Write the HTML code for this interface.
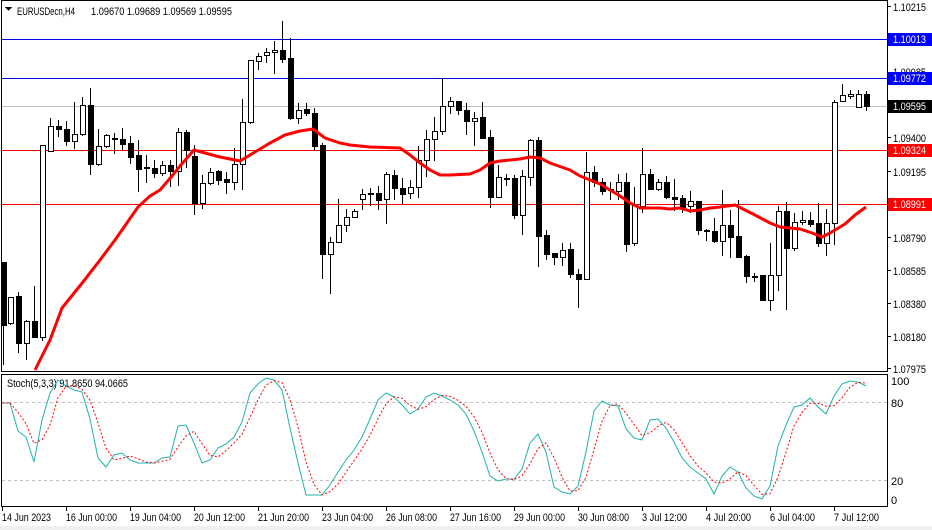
<!DOCTYPE html>
<html><head><meta charset="utf-8"><style>
html,body{margin:0;padding:0;background:#fff;width:932px;height:530px;overflow:hidden}
svg text{font-family:"Liberation Sans",Tahoma,sans-serif;font-size:11px;fill:#000}
</style></head><body>
<svg id="s" width="932" height="530" viewBox="0 0 932 530" xmlns="http://www.w3.org/2000/svg" shape-rendering="crispEdges">
<rect x="0" y="0" width="932" height="530" fill="#fff"/>
<rect x="0" y="526" width="932" height="4" fill="#f0f0f0"/>
<rect x="1.5" y="0.5" width="886" height="371" fill="none" stroke="#000"/>
<rect x="1.5" y="374.5" width="886" height="132" fill="none" stroke="#000"/>
<line x1="2" y1="39.5" x2="887" y2="39.5" stroke="#0000e0"/>
<line x1="2" y1="78.5" x2="887" y2="78.5" stroke="#0000e0"/>
<line x1="2" y1="106.5" x2="887" y2="106.5" stroke="#c0c0c0"/>
<line x1="2" y1="150.5" x2="887" y2="150.5" stroke="#ff0000"/>
<line x1="2" y1="204.5" x2="887" y2="204.5" stroke="#ff0000"/>
<g id="candles"></g>
<polyline fill="none" stroke="#ff0000" stroke-width="3" shape-rendering="auto" stroke-linejoin="round" points="35,370 50,340 62,308 83,282 100,260 115,240 138,207 150,196 160,190 172,176 180,166 194,150 205,153 220,157 240,161 255,152 270,143 285,135 300,131 313,129 325,138 340,143 350,145 370,147 400,148 410,155 420,163 430,170 440,175 450,175 470,174 480,170 490,163 500,161 520,159 530,157 540,158 550,163 570,170 580,176 590,180 600,184 610,190 620,196 630,203 640,208 660,208 670,209 680,208 690,211 700,210 710,208 720,207 735,205 745,210 755,215 770,223 780,227 790,228 800,229 812,233 822,237 830,233 845,224 855,215 866,207"/>
<path d="M5 7 L12 7 L8.5 11 Z" fill="#000"/>
<text x="17" y="15" textLength="58" lengthAdjust="spacingAndGlyphs">EURUSDecn,H4</text>
<text x="91" y="15" textLength="141" lengthAdjust="spacingAndGlyphs">1.09670 1.09689 1.09569 1.09595</text>
<g>
<line x1="887" y1="6.5" x2="891" y2="6.5" stroke="#000"/><text x="893" y="11" textLength="33" lengthAdjust="spacingAndGlyphs">1.10215</text>
<rect x="888" y="33" width="44" height="13" fill="#0000ff"/><text x="893" y="43" textLength="33" lengthAdjust="spacingAndGlyphs" style="fill:#fff">1.10013</text>
<text x="893" y="76" textLength="33" lengthAdjust="spacingAndGlyphs">1.09985</text>
<rect x="888" y="72" width="44" height="13" fill="#0000ff"/><text x="893" y="82" textLength="33" lengthAdjust="spacingAndGlyphs" style="fill:#fff">1.09772</text>
<rect x="888" y="100" width="44" height="13" fill="#000"/><text x="893" y="110" textLength="33" lengthAdjust="spacingAndGlyphs" style="fill:#fff">1.09595</text>
<line x1="887" y1="137.5" x2="891" y2="137.5" stroke="#000"/><text x="893" y="142" textLength="33" lengthAdjust="spacingAndGlyphs">1.09400</text>
<rect x="888" y="144" width="44" height="13" fill="#ff0000"/><text x="893" y="154" textLength="33" lengthAdjust="spacingAndGlyphs" style="fill:#fff">1.09324</text>
<line x1="887" y1="171.5" x2="891" y2="171.5" stroke="#000"/><text x="893" y="176" textLength="33" lengthAdjust="spacingAndGlyphs">1.09195</text>
<rect x="888" y="198" width="44" height="13" fill="#ff0000"/><text x="893" y="208" textLength="33" lengthAdjust="spacingAndGlyphs" style="fill:#fff">1.08991</text>
<line x1="887" y1="237.5" x2="891" y2="237.5" stroke="#000"/><text x="893" y="242" textLength="33" lengthAdjust="spacingAndGlyphs">1.08790</text>
<line x1="887" y1="270.5" x2="891" y2="270.5" stroke="#000"/><text x="893" y="275" textLength="33" lengthAdjust="spacingAndGlyphs">1.08585</text>
<line x1="887" y1="303.5" x2="891" y2="303.5" stroke="#000"/><text x="893" y="308" textLength="33" lengthAdjust="spacingAndGlyphs">1.08380</text>
<line x1="887" y1="336.5" x2="891" y2="336.5" stroke="#000"/><text x="893" y="341" textLength="33" lengthAdjust="spacingAndGlyphs">1.08180</text>
<line x1="887" y1="368.5" x2="891" y2="368.5" stroke="#000"/><text x="893" y="373" textLength="33" lengthAdjust="spacingAndGlyphs">1.07975</text>
</g>
<line x1="2" y1="402.5" x2="887" y2="402.5" stroke="#c0c0c0" stroke-dasharray="3,3"/>
<line x1="2" y1="480.5" x2="887" y2="480.5" stroke="#c0c0c0" stroke-dasharray="3,3"/>
<text x="7" y="387" textLength="121" lengthAdjust="spacingAndGlyphs">Stoch(5,3,3) 91.8650 94.0665</text>
<polyline id="kline" fill="none" stroke="#20b2aa" stroke-width="1" shape-rendering="auto"/>
<polyline id="dline" fill="none" stroke="#ff0000" stroke-width="1" stroke-dasharray="2,2" shape-rendering="auto"/>
<text x="891" y="385">100</text>
<text x="891" y="407">80</text>
<text x="891" y="485">20</text>
<text x="891" y="504">0</text>
<g id="ticks"></g>
<g>
<text x="2" y="521" textLength="49" lengthAdjust="spacingAndGlyphs">14 Jun 2023</text>
<text x="66" y="521" textLength="51" lengthAdjust="spacingAndGlyphs">16 Jun 00:00</text>
<text x="130" y="521" textLength="51" lengthAdjust="spacingAndGlyphs">19 Jun 04:00</text>
<text x="194" y="521" textLength="51" lengthAdjust="spacingAndGlyphs">20 Jun 12:00</text>
<text x="258" y="521" textLength="51" lengthAdjust="spacingAndGlyphs">21 Jun 20:00</text>
<text x="322" y="521" textLength="51" lengthAdjust="spacingAndGlyphs">23 Jun 04:00</text>
<text x="386" y="521" textLength="51" lengthAdjust="spacingAndGlyphs">26 Jun 08:00</text>
<text x="450" y="521" textLength="51" lengthAdjust="spacingAndGlyphs">27 Jun 16:00</text>
<text x="514" y="521" textLength="51" lengthAdjust="spacingAndGlyphs">29 Jun 00:00</text>
<text x="578" y="521" textLength="51" lengthAdjust="spacingAndGlyphs">30 Jun 08:00</text>
<text x="642" y="521" textLength="45" lengthAdjust="spacingAndGlyphs">3 Jul 12:00</text>
<text x="706" y="521" textLength="45" lengthAdjust="spacingAndGlyphs">4 Jul 20:00</text>
<text x="770" y="521" textLength="45" lengthAdjust="spacingAndGlyphs">6 Jul 04:00</text>
<text x="834" y="521" textLength="45" lengthAdjust="spacingAndGlyphs">7 Jul 12:00</text>
</g>
</svg>
<script>
var C=[[3,262,325,262,365,0],[10,297,323,297,325,1],[18,296,343,292,353,0],[26,321,343,320,360,1],[34,321,337,286,338,0],[42,145,337,145,341,1],[50,126,151,118,152,1],[58,126,129,120,137,0],[66,129,141,121,146,0],[74,134,141,102,149,1],[82,105,134,97,136,1],[90,105,164,88,175,0],[98,146,164,129,166,1],[106,135,146,134,148,1],[114,138,139,133,154,0],[122,139,144,128,150,0],[130,143,157,136,164,0],[138,155,169,140,192,0],[146,167,168,155,183,0],[154,168,173,160,178,0],[162,165,173,161,176,1],[170,165,171,160,187,0],[178,132,171,128,186,1],[186,132,150,130,168,0],[194,156,203,145,215,0],[202,183,203,175,209,1],[210,172,183,168,185,1],[218,171,180,170,185,0],[226,179,182,172,194,0],[234,164,182,148,190,1],[242,122,164,99,190,1],[250,60,122,60,124,1],[258,56,61,53,70,1],[266,52,55,48,63,1],[274,50,52,41,74,1],[282,50,59,21,63,0],[290,58,118,38,120,0],[298,110,118,103,124,1],[306,109,113,103,116,0],[314,113,146,108,151,0],[322,145,254,143,279,0],[330,242,254,237,294,1],[338,225,242,199,243,1],[346,217,225,209,232,1],[354,211,217,209,218,1],[362,194,199,189,210,1],[370,193,194,188,206,0],[378,193,200,186,210,0],[386,174,199,172,224,1],[394,175,188,170,200,0],[402,188,194,178,204,0],[410,187,193,180,199,1],[418,160,187,146,198,1],[426,139,160,130,177,1],[434,131,139,117,161,1],[442,106,131,78,135,1],[450,101,106,97,114,1],[458,101,110,101,115,0],[466,110,121,103,135,0],[474,118,121,112,146,1],[482,117,138,102,139,0],[490,137,197,130,208,0],[498,177,197,165,198,1],[506,178,179,174,186,0],[514,178,215,175,219,0],[522,176,215,170,235,1],[530,140,177,139,186,1],[538,140,236,137,267,0],[546,235,254,230,260,0],[554,253,257,253,265,0],[562,250,257,243,266,1],[570,249,274,243,278,0],[578,274,279,269,308,0],[586,172,279,152,280,1],[594,172,182,166,187,0],[602,182,191,178,195,0],[610,189,190,182,200,0],[618,182,191,174,200,1],[626,182,244,173,252,0],[634,205,243,187,246,1],[642,174,206,148,213,1],[650,174,189,169,190,0],[658,182,189,179,191,1],[666,182,197,176,199,0],[674,197,199,179,211,0],[682,198,207,195,213,0],[690,201,206,191,213,1],[698,201,230,201,235,0],[706,230,231,229,241,0],[714,231,241,218,243,0],[722,225,241,190,256,1],[730,225,237,210,258,0],[738,236,257,200,258,0],[746,256,276,255,283,0],[754,276,277,273,282,0],[762,275,300,275,300,0],[770,275,300,243,311,1],[778,211,275,206,291,1],[786,211,248,202,310,0],[794,222,248,213,251,1],[802,220,222,211,225,1],[810,220,224,212,227,0],[818,223,243,203,247,0],[826,223,243,209,256,1],[834,102,223,100,245,1],[842,95,101,84,101,1],[850,94,96,90,99,1],[858,94,107,90,108,1],[866,94,106,91,111,0]];
var g=document.getElementById("candles"),h="";
C.forEach(function(c){var x=c[0];
h+='<line x1="'+(x+.5)+'" y1="'+c[3]+'" x2="'+(x+.5)+'" y2="'+c[4]+'" stroke="#000"/>';
if(c[5]) h+='<rect x="'+(x-2+.5)+'" y="'+(c[1]+.5)+'" width="5" height="'+Math.max(1,c[2]-c[1])+'" fill="#fff" stroke="#000"/>';
else h+='<rect x="'+(x-2)+'" y="'+c[1]+'" width="6" height="'+Math.max(1,c[2]-c[1]+1)+'" fill="#000"/>';});
g.innerHTML=h;
var K=[[2,403],[10,403],[18,431],[26,437],[34,462],[42,420],[50,393],[58,380],[66,386],[74,390],[82,392],[90,419],[98,458],[106,467],[114,455],[122,453],[130,460],[138,463],[146,463],[154,463],[162,458],[170,457],[178,426],[186,425],[194,443],[202,463],[210,460],[218,448],[226,444],[234,437],[242,422],[250,393],[258,384],[266,378],[274,380],[282,390],[290,428],[298,463],[306,495],[314,495],[322,495],[330,485],[338,472],[346,460],[354,450],[362,437],[370,419],[378,400],[386,393],[394,397],[402,405],[410,414],[418,409],[426,397],[434,393],[442,396],[450,400],[458,405],[466,414],[474,431],[482,452],[490,476],[498,481],[506,479],[514,479],[522,469],[530,443],[538,434],[546,452],[554,487],[562,492],[570,494],[578,486],[586,452],[594,411],[602,401],[610,405],[618,406],[626,429],[634,438],[642,440],[650,420],[658,419],[666,428],[674,442],[682,458],[690,467],[698,473],[706,479],[714,494],[722,476],[730,467],[738,472],[746,488],[754,496],[762,499],[770,486],[778,446],[786,425],[794,407],[802,405],[810,398],[818,407],[826,414],[834,396],[842,384],[850,381],[858,382],[866,386]];
document.getElementById("kline").setAttribute("points",K.map(function(p){return p.join(",")}).join(" "));
var D=K.map(function(p,i){var a=K[Math.max(0,i-2)][1],b=K[Math.max(0,i-1)][1];return [p[0],((a+b+p[1])/3).toFixed(1)]});
document.getElementById("dline").setAttribute("points",D.map(function(p){return p.join(",")}).join(" "));
var t="";for(var x=2;x<=834;x+=64)t+='<line x1="'+(x+.5)+'" y1="507" x2="'+(x+.5)+'" y2="511" stroke="#000"/>';
document.getElementById("ticks").innerHTML=t;
</script>
</body></html>
